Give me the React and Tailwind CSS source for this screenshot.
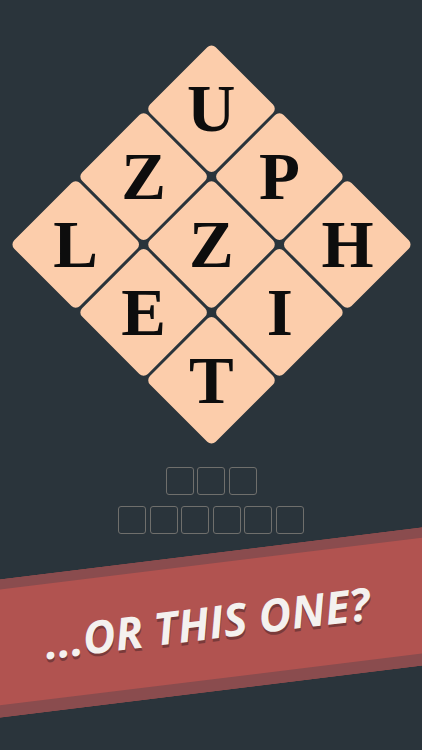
import React from "react";

const tiles = ["U", "P", "H", "Z", "Z", "I", "L", "E", "T"];

function AnswerRow({ count }) {
  return (
    <div className="flex gap-[3.5px]">
      {Array.from({ length: count }).map((_, i) => (
        <div
          key={i}
          className="w-[28px] h-[28px] rounded-[3px] border-[1.5px] border-[#6f6f6c]"
        />
      ))}
    </div>
  );
}

export default function App() {
  return (
    <div className="w-full h-[750px] bg-[#2a343b] overflow-hidden flex flex-col items-center">
      {/* letter board, a 3x3 grid turned on its corner */}
      <div className="mt-[102px] w-[285px] h-[285px] shrink-0 grid grid-cols-3 gap-[3.5px] rotate-45">
        {tiles.map((t, i) => (
          <div
            key={i}
            className="bg-[#fccdab] rounded-[6px] flex items-center justify-center"
          >
            <span className="-rotate-45 text-[67px] leading-none font-bold text-[#0d0d0d] font-['Liberation_Serif',serif]">
              {t}
            </span>
          </div>
        ))}
      </div>

      <div className="mt-[80px] flex flex-col items-center gap-[11px]">
        <AnswerRow count={3} />
        <AnswerRow count={6} />
      </div>

      <div className="mt-[20px] w-[540px] shrink-0 -rotate-[7deg] border-t-[10px] border-b-[12px] border-[#8a4c4e] bg-[#b15350] h-[137px] flex items-center justify-center">
        <span className="text-[45px] font-bold italic text-[#f4f1ef] font-['Open_Sans',sans-serif] [text-shadow:0_3px_0_#7a3a3a] pr-[8px]">
          ...OR THIS ONE?
        </span>
      </div>
    </div>
  );
}
